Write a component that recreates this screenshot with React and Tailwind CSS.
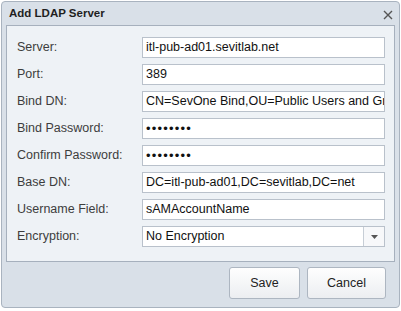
import React from "react";

const fields = [
  { label: "Server:", value: "itl-pub-ad01.sevitlab.net" },
  { label: "Port:", value: "389" },
  { label: "Bind DN:", value: "CN=SevOne Bind,OU=Public Users and Groups,DC=itl-pub-ad01" },
  { label: "Bind Password:", value: "••••••••", secret: true },
  { label: "Confirm Password:", value: "••••••••", secret: true },
  { label: "Base DN:", value: "DC=itl-pub-ad01,DC=sevitlab,DC=net" },
  { label: "Username Field:", value: "sAMAccountName" },
];

const App = () => {
  return (
    <div className="w-[401px] h-[311px] bg-white pt-px pl-px font-['Liberation_Sans',Arial,sans-serif]">
      <div className="w-[399px] h-[307px] flex flex-col px-[4px] rounded-[4px] border border-[#a9b3bf] bg-[#d9e0e8]">
        <div className="h-[23px] flex items-center justify-between pl-[3px] pr-[2px]">
          <span className="text-[11.5px] font-bold text-[#1f1f1f] leading-none">Add LDAP Server</span>
          <svg width="10" height="10" viewBox="0 0 10 10" className="mt-[2px]">
            <path d="M1 1 L9 9 M9 1 L1 9" stroke="#555" strokeWidth="1.4" fill="none" />
          </svg>
        </div>

        <div className="flex flex-col gap-[6px] border border-[#a6b0bd] bg-[#eef2f6] pt-[11px] pb-[14px] pl-[10px] pr-[9px]">
          {fields.map((f) => (
            <div key={f.label} className="flex items-center h-[21px]">
              <label className="w-[125px] text-[12.5px] text-[#3d3d3d]">{f.label}</label>
              <div className="w-[243px] h-[21px] bg-white border border-[#b9c1cb] flex items-center pl-[3px] overflow-hidden whitespace-nowrap">
                <span className={f.secret ? "text-[13px] text-[#111] tracking-[1.2px]" : "text-[12.5px] text-[#111]"}>{f.value}</span>
              </div>
            </div>
          ))}
          <div className="flex items-center h-[21px]">
            <label className="w-[125px] text-[12.5px] text-[#3d3d3d]">Encryption:</label>
            <div className="w-[243px] h-[21px] bg-white border border-[#b9c1cb] flex items-center">
              <span className="flex-1 pl-[3px] text-[12.5px] text-[#111]">No Encryption</span>
              <div className="w-[21px] h-full border-l border-[#c7ced6] bg-[#f7f8fa] flex items-center justify-center">
                <svg width="7" height="4" viewBox="0 0 7 4">
                  <path d="M0 0 L7 0 L3.5 4 Z" fill="#555" />
                </svg>
              </div>
            </div>
          </div>
        </div>

        <div className="flex justify-end gap-[7px] pt-[5px] pr-[9px]">
          <button className="w-[71px] h-[32px] rounded-[3px] border border-[#adb6c1] bg-gradient-to-b from-[#fefefe] to-[#eceef1] text-[12.5px] text-[#222]">
            Save
          </button>
          <button className="w-[79px] h-[32px] rounded-[3px] border border-[#adb6c1] bg-gradient-to-b from-[#fefefe] to-[#eceef1] text-[12.5px] text-[#222]">
            Cancel
          </button>
        </div>
      </div>
    </div>
  );
};

export default App;
